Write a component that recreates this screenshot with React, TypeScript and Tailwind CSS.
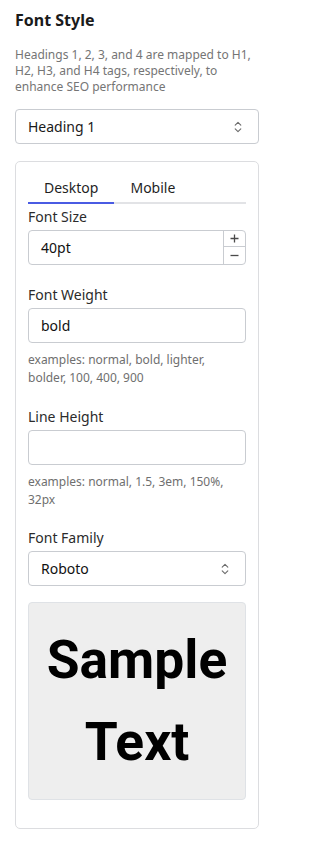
import React from "react";

function UpDown() {
  return (
    <svg width="8" height="12" viewBox="0 0 8 12" fill="none" stroke="#6b6b6b" strokeWidth="1.1" strokeLinecap="round" strokeLinejoin="round">
      <path d="M1.2 4.2 L4 1.4 L6.8 4.2" />
      <path d="M1.2 7.8 L4 10.6 L6.8 7.8" />
    </svg>
  );
}

function Label({ children, first }: { children: React.ReactNode; first?: boolean }) {
  return (
    <div className={`${first ? "mt-[3px]" : "mt-5"} mb-[3px] text-[14px] leading-5 text-[#2b2b2b]`}>{children}</div>
  );
}

function Helper({ children }: { children: React.ReactNode }) {
  return <div className="mt-2 text-[12px] leading-[18px] text-[#6f6f6f]">{children}</div>;
}

export default function App() {
  return (
    <div className="w-[274px] bg-white px-[15px] pt-2 pb-4 font-['Noto_Sans',sans-serif]">
      <h2 className="text-[16px] font-bold leading-6 text-[#1a1a1a]">Font Style</h2>
      <p className="mt-[15px] text-[12px] leading-4 text-[#757575]">
        Headings 1, 2, 3, and 4 are mapped to H1, H2, H3, and H4 tags, respectively, to enhance SEO performance
      </p>
      <div className="mt-[14px] flex h-[35px] items-center justify-between rounded-[4px] border border-[#c9ccd1] pl-3 pr-4 text-[14px] text-[#1a1a1a]">
        <span>Heading 1</span>
        <UpDown />
      </div>

      <div className="mt-[17px] rounded-[5px] border border-[#dcdde0] p-3 pb-7">
        <div className="flex border-b-2 border-[#e2e3e6]">
          <div className="-mb-[2px] border-b-2 border-[#4a5be3] px-4 pt-1 pb-1 text-[14px] leading-5 text-[#1f1f1f]">Desktop</div>
          <div className="-mb-[2px] border-b-2 border-transparent px-4 pt-1 pb-1 text-[14px] leading-5 text-[#1f1f1f]">Mobile</div>
        </div>

        <Label first>Font Size</Label>
        <div className="flex h-[35px] rounded-[4px] border border-[#c9ccd1] text-[14px] text-[#111]">
          <div className="flex flex-1 items-center pl-3">40pt</div>
          <div className="flex w-[22px] flex-col border-l border-[#c9ccd1]">
            <div className="flex h-[16px] items-center justify-center border-b border-[#c9ccd1]">
              <svg width="9" height="9" viewBox="0 0 9 9" stroke="#4a4a4a" strokeWidth="1.3">
                <path d="M4.5 0.5 V8.5 M0.5 4.5 H8.5" />
              </svg>
            </div>
            <div className="flex h-[17px] items-center justify-center">
              <svg width="9" height="9" viewBox="0 0 9 9" stroke="#4a4a4a" strokeWidth="1.3">
                <path d="M0.5 4.5 H8.5" />
              </svg>
            </div>
          </div>
        </div>

        <Label>Font Weight</Label>
        <div className="flex h-[35px] items-center rounded-[4px] border border-[#c9ccd1] pl-3 text-[14px] text-[#111]">bold</div>
        <Helper>examples: normal, bold, lighter, bolder, 100, 400, 900</Helper>

        <Label>Line Height</Label>
        <div className="h-[35px] rounded-[4px] border border-[#c9ccd1]"></div>
        <Helper>examples: normal, 1.5, 3em, 150%, 32px</Helper>

        <div className="mt-[19px] mb-[3px] text-[14px] leading-5 text-[#2b2b2b]">Font Family</div>
        <div className="flex h-[35px] items-center justify-between rounded-[4px] border border-[#c9ccd1] pl-3 pr-4 text-[14px] text-[#111]">
          <span>Roboto</span>
          <UpDown />
        </div>

        <div className="mt-4 flex h-[198px] items-center justify-center rounded-[4px] border border-[#dfe2e6] bg-[#eeeeee]">
          <div className="text-center font-['Roboto',sans-serif] text-[53.33px] font-bold leading-[82px] text-black">
            Sample Text
          </div>
        </div>
      </div>
    </div>
  );
}
